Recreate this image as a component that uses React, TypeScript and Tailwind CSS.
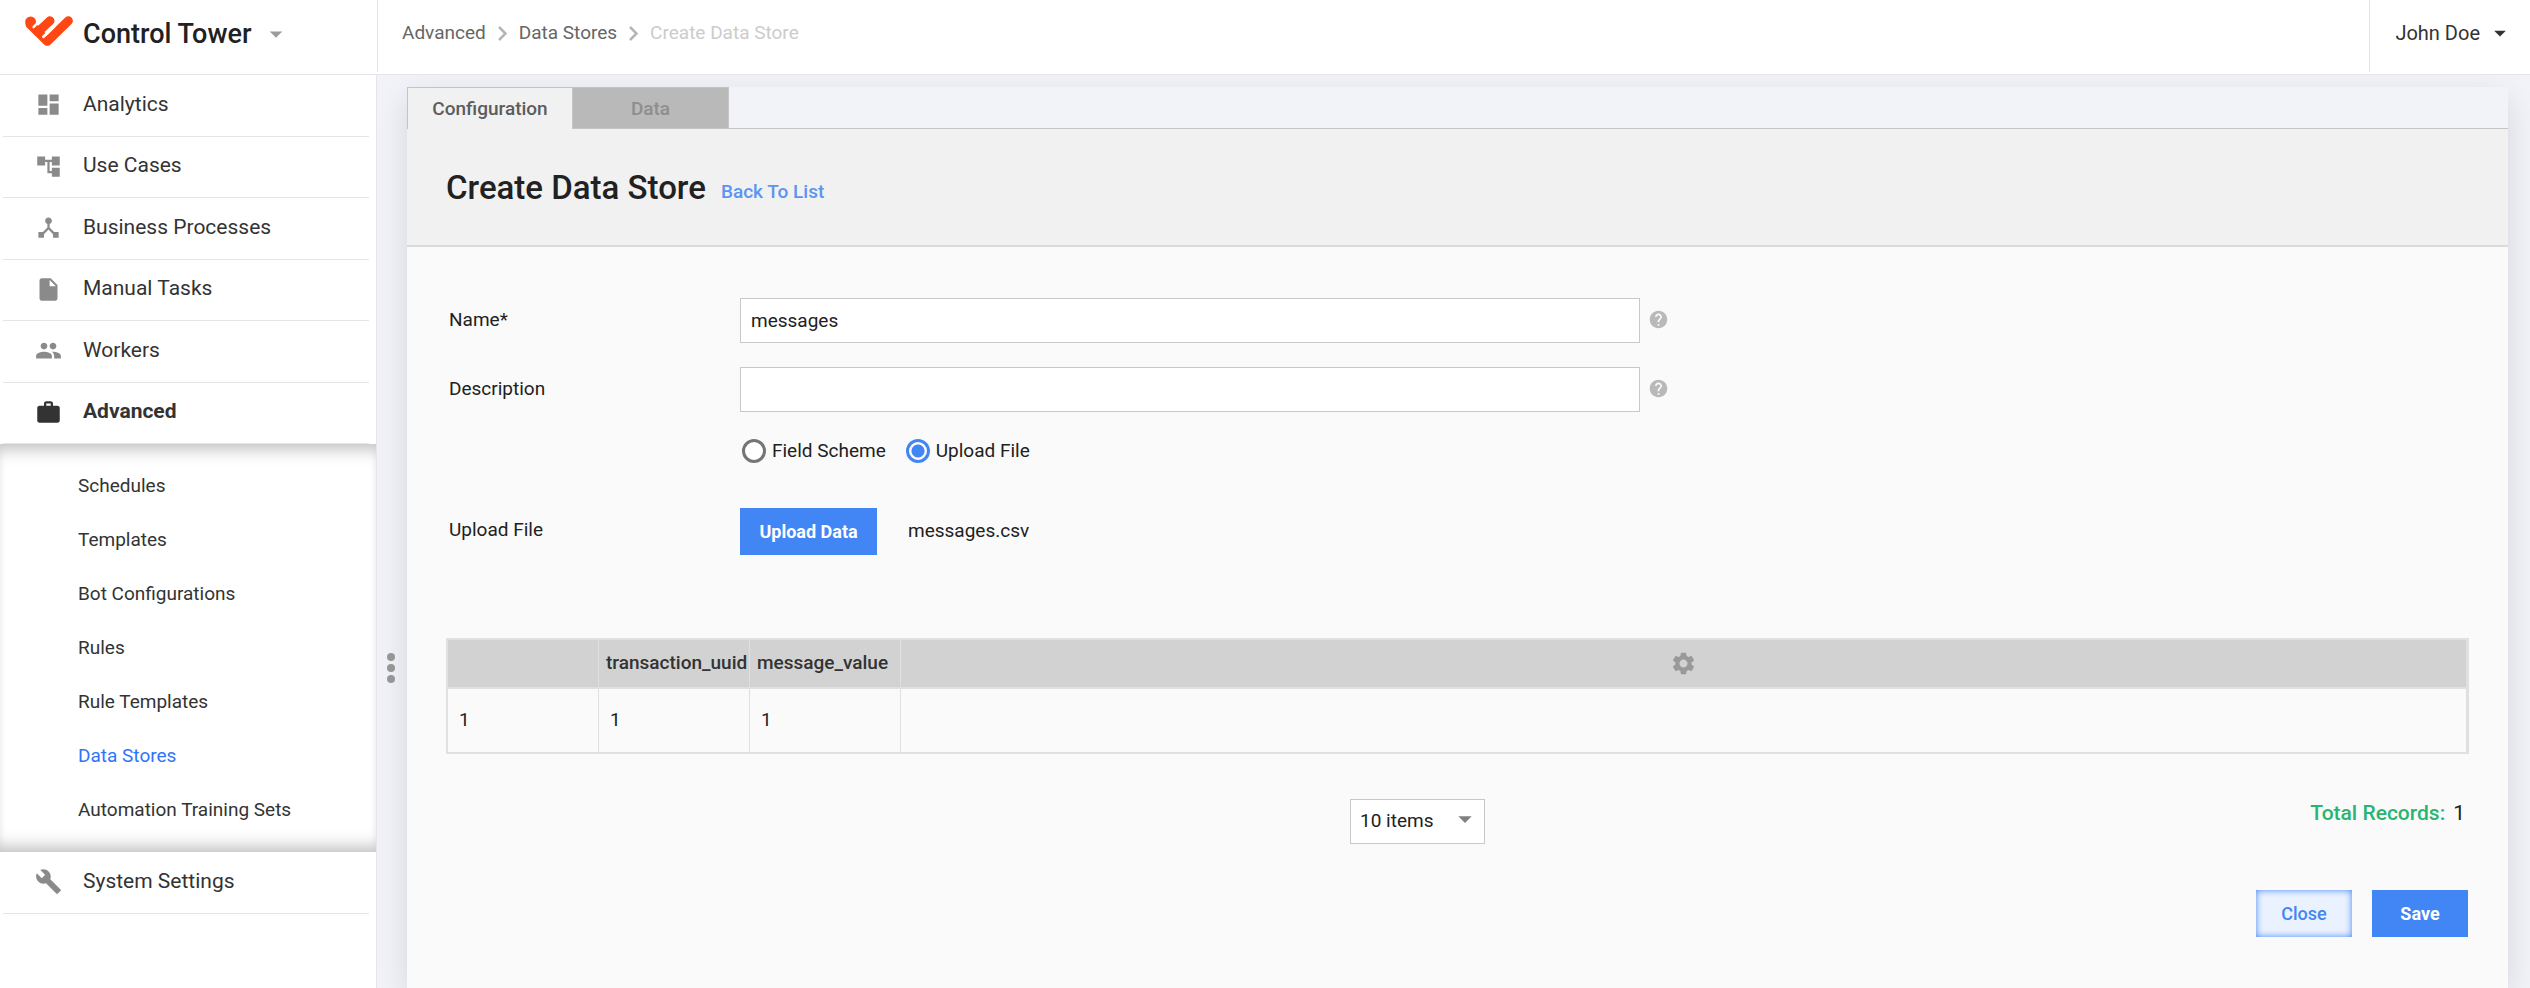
import React, { useState } from 'react';
import type { IconType } from 'react-icons';
import {
  MdAccountTree,
  MdArrowDropDown,
  MdBuild,
  MdDashboard,
  MdDeviceHub,
  MdHelp,
  MdInsertDriveFile,
  MdPeople,
  MdSettings,
  MdWork,
} from 'react-icons/md';

type NavItem = {
  label: string;
  icon: IconType;
  active?: boolean;
};

const mainNav: NavItem[] = [
  { label: 'Analytics', icon: MdDashboard },
  { label: 'Use Cases', icon: MdAccountTree },
  { label: 'Business Processes', icon: MdDeviceHub },
  { label: 'Manual Tasks', icon: MdInsertDriveFile },
  { label: 'Workers', icon: MdPeople },
  { label: 'Advanced', icon: MdWork, active: true },
];

const advancedNav = [
  'Schedules',
  'Templates',
  'Bot Configurations',
  'Rules',
  'Rule Templates',
  'Data Stores',
  'Automation Training Sets',
];

const columns = ['transaction_uuid', 'message_value'];
const rows = [['1', '1', '1']];

const Logo = () => (
  <svg
    width="48"
    height="30"
    viewBox="0 0 48 30"
    fill="none"
    stroke="#ff4713"
    strokeLinecap="round"
    strokeLinejoin="round"
    className="mb-1.5"
  >
    <circle cx="5.6" cy="5.8" r="5.4" fill="#ff4713" stroke="none" />
    <path d="M5 8.2L22 25" strokeWidth="9" />
    <path d="M43.4 4.8L22.4 25.2" strokeWidth="9" />
    <path d="M25 4.8L13 16" strokeWidth="9" />
    <path d="M13.5 6L8.5 11.2" stroke="#fff" strokeWidth="2.4" />
    <path d="M29.5 10L18.5 20.8" stroke="#fff" strokeWidth="2.8" />
  </svg>
);

const Crumb = () => (
  <svg width="9" height="15" viewBox="0 0 9 15" fill="none" stroke="#b5b5b5" strokeWidth="2.5">
    <path d="M1 1l6.5 6.5L1 14" />
  </svg>
);

const NavRow: React.FC<{ item: NavItem }> = ({ item }) => {
  const Icon = item.icon;
  return (
    <li className="ml-[3px] mr-[7px] border-b border-[#e5e5e5] odd:h-[62px] even:h-[61px]">
      <a
        href="#"
        className={`flex h-full items-center gap-[21px] pb-0.5 pl-8 text-[21px] text-[#333] ${
          item.active ? 'font-bold' : 'font-normal'
        }`}
      >
        <Icon size={27} className={item.active ? 'text-[#333]' : 'text-[#8a8a8a]'} />
        {item.label}
      </a>
    </li>
  );
};

const Sidebar = () => (
  <nav className="w-[377px] shrink-0 border-r border-[#e5e5e9] bg-white">
    <ul>
      {mainNav.map((item) => (
        <NavRow key={item.label} item={item} />
      ))}
    </ul>
    <ul className="bg-white py-[15px] shadow-[inset_0_18px_16px_-12px_#c4c4c4,inset_0_-18px_16px_-12px_#c4c4c4,inset_0_0_8px_#eee]">
      {advancedNav.map((label) => (
        <li key={label}>
          <a
            href="#"
            className={`flex h-[54px] items-center pl-[78px] text-[19px] ${
              label === 'Data Stores' ? 'text-[#2f74fa]' : 'text-[#333]'
            }`}
          >
            {label}
          </a>
        </li>
      ))}
    </ul>
    <ul>
      <NavRow item={{ label: 'System Settings', icon: MdBuild }} />
    </ul>
  </nav>
);

const Header = () => (
  <header className="flex h-[75px] border-b border-[#e5e5e9] bg-white">
    <button className="mb-0.5 flex w-[378px] shrink-0 items-center gap-2.5 border-r border-[#e5e5e5] pb-1 pl-[25px]">
      <Logo />
      <span className="text-[27px] font-medium text-[#212121]">Control Tower</span>
      <MdArrowDropDown size={30} className="text-[#9b9b9b]" />
    </button>
    <nav className="flex flex-1 items-center gap-3 pb-2 pl-6 text-[19px] text-[#666]">
      <a href="#">Advanced</a>
      <Crumb />
      <a href="#">Data Stores</a>
      <Crumb />
      <span className="text-[#ccc]">Create Data Store</span>
    </nav>
    <button className="mb-0.5 flex items-center gap-1.5 border-l border-[#e5e5e5] pb-1.5 pl-[25px] pr-4 text-xl text-[#333]">
      John Doe
      <MdArrowDropDown size={28} />
    </button>
  </header>
);

const Tabs = () => (
  <div className="flex text-[19px] font-medium">
    <button className="h-[42px] w-[165px] border-l border-t border-[#c4c4c4] bg-[#f1f1f1] pt-0.5 text-[#5c5c5c]">
      Configuration
    </button>
    <button disabled className="h-[42px] w-[157px] border border-[#c4c4c4] bg-[#b9b9b9] pt-0.5 text-[#8e8e8e]">
      Data
    </button>
    <div className="flex-1 border-b border-[#c4c4c4] bg-[#f2f3f8]" />
  </div>
);

type TextFieldProps = {
  id: string;
  label: string;
  value: string;
  onChange: (value: string) => void;
};

const TextField: React.FC<TextFieldProps> = ({ id, label, value, onChange }) => (
  <div className="flex items-center">
    <label htmlFor={id} className="w-[291px] shrink-0">
      {label}
    </label>
    <input
      id={id}
      type="text"
      value={value}
      onChange={(e) => onChange(e.target.value)}
      className="h-[45px] w-full max-w-[900px] border border-[#c8c8c8] bg-white px-2.5 outline-none"
    />
    <MdHelp size={21} className="mb-0.5 ml-2 shrink-0 text-[#b9b9b9]" />
  </div>
);

const radioClass =
  'size-6 appearance-none rounded-full border-[3px] border-[#757575] bg-white checked:border-[#4285f4] checked:bg-[radial-gradient(circle,#4285f4_6px,#fff_7px)]';

const DataTable = () => (
  <table className="w-full table-fixed border-separate border-spacing-0 border-2 border-[#e0e0e0] text-left">
    <thead>
      <tr className="h-[49px] bg-[#d2d2d2] text-[#333]">
        <th className="w-[151px] border-b-2 border-r border-[#e0e0e0]" />
        {columns.map((name) => (
          <th key={name} className="w-[151px] overflow-hidden border-b-2 border-r border-[#e0e0e0] pl-[7px] font-medium">
            {name}
          </th>
        ))}
        <th className="border-b-2 border-r border-[#e0e0e0]">
          <button aria-label="Table settings" className="mx-auto block text-[#999]">
            <MdSettings size={27} />
          </button>
        </th>
      </tr>
    </thead>
    <tbody>
      {rows.map((cells, i) => (
        <tr key={i} className="h-[63px]">
          {cells.map((cell, j) => (
            <td key={j} className="border-r border-[#e0e0e0] pl-[11px]">
              {cell}
            </td>
          ))}
          <td className="border-r border-[#e0e0e0]" />
        </tr>
      ))}
    </tbody>
  </table>
);

const DataStoreForm = () => {
  const [name, setName] = useState('messages');
  const [description, setDescription] = useState('');
  const [source, setSource] = useState('file');

  return (
    <form className="px-[39px] pt-[51px] text-[19px] text-[#212121]" onSubmit={(e) => e.preventDefault()}>
      <div className="flex flex-col gap-6 pl-[3px]">
        <TextField id="name" label="Name*" value={name} onChange={setName} />
        <TextField id="description" label="Description" value={description} onChange={setDescription} />
      </div>

      <div className="mt-[27px] flex h-6 items-center gap-5 pl-[296px]">
        <label className="flex items-center gap-1.5">
          <input
            type="radio"
            name="source"
            className={radioClass}
            checked={source === 'fields'}
            onChange={() => setSource('fields')}
          />
          Field Scheme
        </label>
        <label className="flex items-center gap-1.5">
          <input
            type="radio"
            name="source"
            className={radioClass}
            checked={source === 'file'}
            onChange={() => setSource('file')}
          />
          Upload File
        </label>
      </div>

      <div className="mt-[45px] flex items-center pl-[3px]">
        <span className="w-[291px] pb-0.5">Upload File</span>
        <button type="button" className="h-[47px] w-[137px] bg-[#4285f4] text-lg font-bold text-white">
          Upload Data
        </button>
        <span className="ml-[31px]">messages.csv</span>
      </div>

      <div className="mt-[83px]">
        <DataTable />
      </div>

      <div className="mt-[45px] flex">
        <div className="flex-1" />
        <div className="relative">
          <select
            aria-label="Items per page"
            className="h-[45px] w-[135px] appearance-none border border-[#c8c8c8] bg-white pl-[9px] outline-none"
          >
            <option>10 items</option>
            <option>25 items</option>
            <option>50 items</option>
          </select>
          <MdArrowDropDown size={32} className="pointer-events-none absolute right-1 top-1 text-[#808080]" />
        </div>
        <div className="flex-1 pl-19 pr-1 text-right text-[21px] leading-7">
          <span className="mr-2 font-medium text-[#28b573]">Total Records:</span>1
        </div>
      </div>

      <div className="mt-[46px] flex justify-end gap-5 pr-px text-lg">
        <button
          type="button"
          className="h-[47px] w-24 bg-[#ebf2ff] font-medium text-[#4285f4] shadow-[inset_0_0_7px_#4285f4]"
        >
          Close
        </button>
        <button type="submit" className="h-[47px] w-24 bg-[#4285f4] font-bold text-white">
          Save
        </button>
      </div>
    </form>
  );
};

export default function App() {
  return (
    <div className="flex min-h-screen flex-col bg-[#f2f3f8] font-['Roboto','Liberation_Sans',sans-serif]">
      <Header />
      <div className="flex flex-1 overflow-hidden">
        <Sidebar />
        {/* drag handle for resizing the sidebar */}
        <div className="flex w-[30px] shrink-0 flex-col items-center gap-[3px] pr-0.5 pt-[578px]">
          <span className="size-2 rounded-full bg-[#999]" />
          <span className="size-2 rounded-full bg-[#999]" />
          <span className="size-2 rounded-full bg-[#999]" />
        </div>
        <main className="mr-[22px] mt-3 flex min-w-0 flex-1 flex-col shadow-[0_10px_30px_rgba(0,0,0,0.12)]">
          <Tabs />
          <div className="flex h-[118px] items-center gap-[15px] border-b-2 border-[#dadada] bg-[#f1f1f1] px-[39px] pt-0.5">
            <h1 className="text-[33px] font-medium text-[#212121]">Create Data Store</h1>
            <a href="#" className="pt-2 text-[19px] font-medium text-[#5c94f0]">
              Back To List
            </a>
          </div>
          <div className="flex-1 bg-[#fafafa]">
            <DataStoreForm />
          </div>
        </main>
      </div>
    </div>
  );
}
